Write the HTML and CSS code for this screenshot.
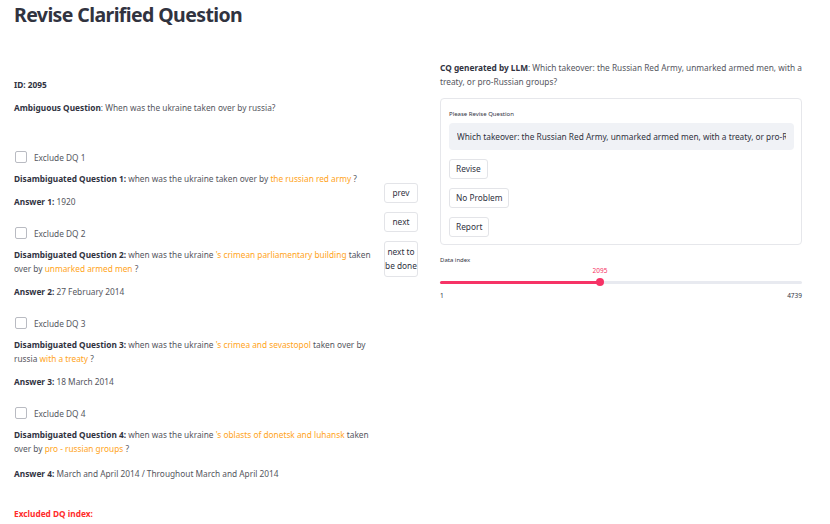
FILE: index.html
```html
<!DOCTYPE html>
<html lang="en">
<head>
  <meta charset="UTF-8">
  <meta name="viewport" content="width=device-width, initial-scale=1.0">
  <title>Revise Clarified Question</title>
  <link rel="stylesheet" href="styles.css">
</head>
<body>
  <h1>Revise Clarified Question</h1>
  <div class="columns">
    <div class="left">
      <p><b>ID: 2095</b></p>
      <p class="ambig"><b>Ambiguous Question</b>: When was the ukraine taken over by russia?</p>

      <div class="dq">
        <label class="check"><span class="box"></span>Exclude DQ 1</label>
        <p><b>Disambiguated Question 1:</b> when was the ukraine taken over by <span class="hl">the russian red army</span> ?</p>
        <p><b>Answer 1:</b> 1920</p>
      </div>
      <div class="dq">
        <label class="check"><span class="box"></span>Exclude DQ 2</label>
        <p><b>Disambiguated Question 2:</b> when was the ukraine <span class="hl">'s crimean parliamentary building</span> taken over by <span class="hl">unmarked armed men</span> ?</p>
        <p><b>Answer 2:</b> 27 February 2014</p>
      </div>
      <div class="dq">
        <label class="check"><span class="box"></span>Exclude DQ 3</label>
        <p><b>Disambiguated Question 3:</b> when was the ukraine <span class="hl">'s crimea and sevastopol</span> taken over by russia <span class="hl">with a treaty</span> ?</p>
        <p><b>Answer 3:</b> 18 March 2014</p>
      </div>
      <div class="dq">
        <label class="check"><span class="box"></span>Exclude DQ 4</label>
        <p><b>Disambiguated Question 4:</b> when was the ukraine <span class="hl">'s oblasts of donetsk and luhansk</span> taken over by <span class="hl">pro - russian groups</span> ?</p>
        <p class="last-answer"><b>Answer 4:</b> March and April 2014 / Throughout March and April 2014</p>
      </div>

      <p class="excluded">Excluded DQ index:</p>
    </div>

    <div class="mid">
      <button class="btn">prev</button>
      <button class="btn">next</button>
      <button class="btn">next to<br>be done</button>
    </div>

    <div class="right">
      <p class="cq"><b>CQ generated by LLM</b>: Which takeover: the Russian Red Army, unmarked armed men, with a treaty, or pro-Russian groups?</p>
      <div class="form">
        <div class="small-label">Please Revise Question</div>
        <input class="revise-input" type="text" value="Which takeover: the Russian Red Army, unmarked armed men, with a treaty, or pro-Russian groups?">
        <button class="btn">Revise</button>
        <button class="btn">No Problem</button>
        <button class="btn">Report</button>
      </div>
      <div class="small-label">Data index</div>
      <div class="slider">
        <div class="track"><div class="fill" style="width: 44.2%;"></div></div>
        <div class="thumb" style="left: 44.2%;"></div>
        <div class="value" style="left: 44.2%;">2095</div>
      </div>
      <div class="ticks">
        <span>1</span>
        <span>4739</span>
      </div>
    </div>
  </div>
</body>
</html>
```

FILE: styles.css
```css
body {
  margin: 0;
  padding: 0 14px;
  font-family: "Noto Sans", "Open Sans", sans-serif;
  font-size: 8.3px;
  color: #55565e;
  background: #fff;
}

h1 {
  margin: 0;
  padding-top: 2px;
  font-size: 19.5px;
  letter-spacing: -0.6px;
  line-height: 26px;
  font-weight: 700;
  color: #31333f;
}

b {
  color: #31333f;
  font-weight: 700;
}

p {
  margin: 0 0 9px;
  line-height: 14px;
}

.columns {
  display: flex;
  align-items: flex-start;
  margin-top: 18px;
}

.left {
  width: 362px;
  padding-top: 32px;
}

.ambig {
  margin-bottom: 35px;
}

.dq {
  margin-bottom: 17px;
}

.check {
  display: flex;
  align-items: center;
  height: 14px;
  margin-bottom: 8px;
  color: #55565e;
}

.box {
  width: 10px;
  height: 10px;
  border: 1px solid #b9bbc2;
  border-radius: 2px;
  margin: 0 7px 0 1px;
}

.hl {
  color: #ffa421;
}

.last-answer {
  margin-top: 11px;
}

.excluded {
  margin-top: 26px;
  color: #ff2b2b;
  font-weight: 700;
}

.mid {
  width: 34px;
  margin-left: 8px;
  padding-top: 137px;
  display: flex;
  flex-direction: column;
  align-items: flex-start;
  gap: 9px;
}

.btn {
  font-family: inherit;
  font-size: 8.3px;
  line-height: 14px;
  color: #31333f;
  background: #fff;
  border: 1px solid #e3e4e8;
  border-radius: 3px;
  padding: 2px 6px 2px;
  cursor: pointer;
}

.mid .btn {
  width: 34px;
  padding: 2px 0 2px;
  white-space: nowrap;
}

.mid .btn:last-child {
  padding: 3px 0 3px;
}

.right {
  width: 362px;
  margin-left: 22px;
  padding-top: 15px;
}

.cq {
  margin-bottom: 9px;
}

.form {
  border: 1px solid #e6e7eb;
  border-radius: 4px;
  padding: 10px 7px 7px 8px;
  display: flex;
  flex-direction: column;
  align-items: flex-start;
  gap: 9px;
  margin-bottom: 10px;
}

.small-label {
  font-size: 6px;
  line-height: 10px;
  color: #31333f;
}

.form .small-label {
  margin-bottom: -5px;
}

.revise-input {
  box-sizing: border-box;
  width: 100%;
  height: 27px;
  border: none;
  border-radius: 4px;
  background: #f0f2f6;
  padding: 0 8px;
  font-family: inherit;
  font-size: 8.3px;
  color: #31333f;
  outline: none;
}

.slider {
  position: relative;
  height: 30px;
}

.track {
  position: absolute;
  left: 0;
  right: 0;
  top: 16px;
  height: 3px;
  border-radius: 2px;
  background: #e8eaf0;
}

.fill {
  height: 100%;
  border-radius: 2px;
  background: #f63366;
}

.thumb {
  position: absolute;
  top: 13px;
  width: 8px;
  height: 8px;
  margin-left: -4px;
  border-radius: 50%;
  background: #f63366;
}

.value {
  position: absolute;
  top: 1px;
  transform: translateX(-50%);
  font-size: 6.5px;
  color: #f63366;
}

.ticks {
  display: flex;
  justify-content: space-between;
  font-size: 6.5px;
  color: #31333f;
  margin-top: -4px;
}
```
